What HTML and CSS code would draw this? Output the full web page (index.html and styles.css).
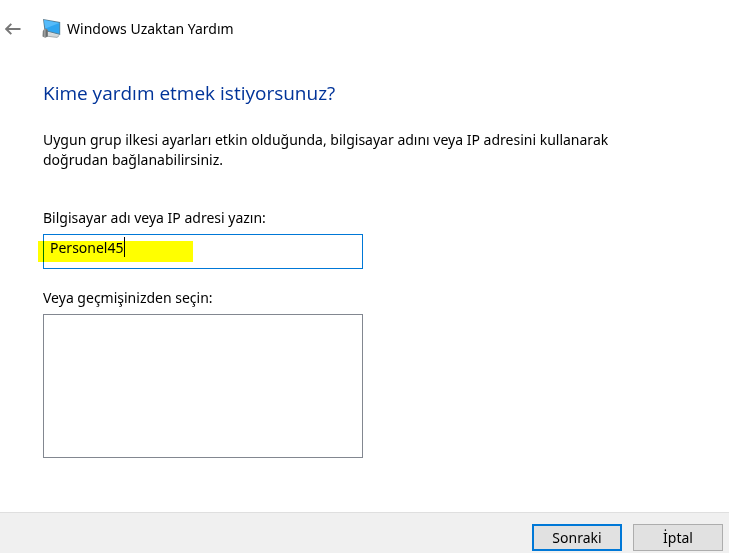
FILE: index.html
```html
<!DOCTYPE html>
<html lang="tr">
<head>
<meta charset="utf-8">
<title>Windows Uzaktan Yardım</title>
<link rel="stylesheet" href="styles.css">
</head>
<body>
<form class="wizard">
  <header class="titlebar">
    <button class="back" type="button" aria-label="Geri">
      <svg width="16" height="12" viewBox="0 0 16 12" fill="none" stroke="#777" stroke-width="1.9"><path d="M15.500 6H1.200M6.300 .8L1.200 6l5.100 5.200"/></svg>
    </button>
    <svg class="app-icon" width="19" height="20" viewBox="0 0 19 20">
      <path d="M5 13l8 2 4.500 1-2 2.300-10-1.300z" fill="#d3d8da"/>
      <path d="M5 17.200l10 1.200 2.200-1.800" fill="none" stroke="#8b9599" stroke-width=".8"/>
      <path d="M1 0L18.200 3v13L2.500 12z" fill="#5d7f92"/>
      <path d="M2 1L17.400 3.900v10.900L3.500 11.300z" fill="#2fa5f0"/>
      <path d="M2 1L17.400 3.900L3.300 9.500z" fill="#55bbfa"/>
      <path d="M.8 12l1.700-2.500 2.700.5.700 2v5.500l-2.700 1.200L.5 17.500z" fill="#7b7f80"/>
      <path d="M2.800 10v8" stroke="#aaa" stroke-width="1"/>
      <path d="M4.800 11v6.500" stroke="#606465" stroke-width="1"/>
    </svg>
    <span class="app-name">Windows Uzaktan Yardım</span>
  </header>
  <main class="content">
    <h1>Kime yardım etmek istiyorsunuz?</h1>
    <p>Uygun grup ilkesi ayarları etkin olduğunda, bilgisayar adını veya IP adresini kullanarak doğrudan bağlanabilirsiniz.</p>
    <label for="host">Bilgisayar adı veya IP adresi yazın:</label>
    <div class="field">
      <input id="host" type="text" value="Personel45">
      <span class="marker"></span>
      <span class="caret"></span>
    </div>
    <label for="history">Veya geçmişinizden seçin:</label>
    <select id="history" size="6"></select>
  </main>
  <footer class="actions">
    <button class="button primary" type="submit">Sonraki</button>
    <button class="button" type="button">İptal</button>
  </footer>
</form>
</body>
</html>
```
FILE: styles.css
```css
* {
  box-sizing: border-box;
}

body {
  margin: 0;
  background: #fff;
  color: #000;
  font: 14px/20px "Segoe UI", "Noto Sans", sans-serif;
}

button,
input,
select {
  font: inherit;
  color: inherit;
  border-radius: 0;
}

.wizard {
  display: flex;
  flex-direction: column;
  min-height: 100vh;
}

.titlebar {
  display: flex;
  align-items: center;
  padding: 19px 5px 0;
}

.back {
  display: flex;
  padding: 0;
  border: 0;
  background: none;
}

.app-icon {
  margin: 0 6px 0 21px;
}

.content {
  flex: 1;
  display: flex;
  flex-direction: column;
  align-items: flex-start;
  padding: 40px 43px;
}

h1 {
  margin: 0 0 23px;
  color: #003399;
  font-family: "Segoe UI", "Open Sans", sans-serif;
  font-size: 19px;
  line-height: 28px;
  font-weight: 400;
}

p {
  max-width: 580px;
  margin: 0 0 38px;
}

label {
  margin-bottom: 6px;
}

.field {
  position: relative;
  width: 100%;
  max-width: 320px;
  margin-bottom: 19px;
}

.field input {
  display: block;
  width: 100%;
  height: 35px;
  padding: 0 6px 8px;
  border: 1px solid #0078d7;
  outline: 0;
}

.marker {
  position: absolute;
  top: 7px;
  left: -5px;
  width: 155px;
  height: 21px;
  background: #ff0;
  mix-blend-mode: multiply;
  pointer-events: none;
}

.caret {
  position: absolute;
  top: 3px;
  left: 81px;
  width: 1px;
  height: 20px;
  background: #000;
}

select {
  width: 100%;
  max-width: 320px;
  height: 144px;
  border: 1px solid #828790;
  background: #fff;
  outline: 0;
}

.actions {
  display: flex;
  justify-content: flex-end;
  gap: 11px;
  padding: 11px 6px 2px;
  border-top: 1px solid #dfdfdf;
  background: #f0f0f0;
}

.button {
  width: 90px;
  height: 27px;
  padding: 0;
  border: 1px solid #adadad;
  background: #e1e1e1;
}

.button.primary {
  border: 2px solid #0078d7;
}
```
